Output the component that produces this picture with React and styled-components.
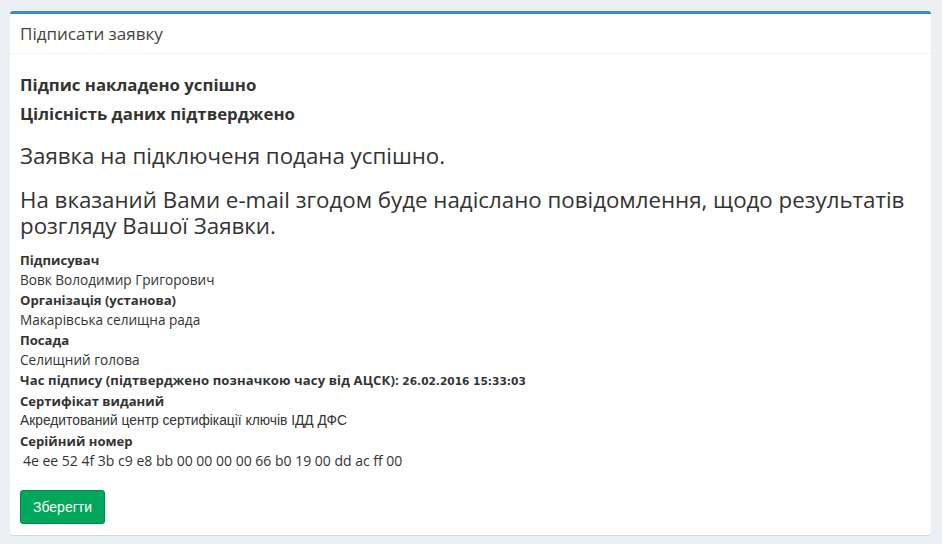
import styled, { createGlobalStyle } from "styled-components";

const GlobalStyle = createGlobalStyle`
  html, body {
    margin: 0;
    padding: 0;
    background: #ecf0f5;
  }
  body {
    font-family: "Open Sans", "Liberation Sans", sans-serif;
    color: #333;
  }
`;

const Page = styled.div`
  padding: 11px 11px 9px 10px;
`;

const Box = styled.div`
  background: #fff;
  border-top: 3px solid #3c8dbc;
  border-radius: 3px;
  box-shadow: 0 1px 1px rgba(0, 0, 0, 0.1);
`;

const BoxHeader = styled.div`
  height: 39px;
  display: flex;
  align-items: center;
  padding: 0 10px;
  border-bottom: 1px solid #f4f4f4;
`;

const BoxTitle = styled.h3`
  margin: 0 0 1px;
  font-size: 17px;
  font-weight: 400;
  color: #444;
`;

const BoxBody = styled.div`
  padding: 16px 10px 11px;
`;

const Status = styled.h4`
  margin: 0;
  font-size: 16.8px;
  font-weight: 700;
  line-height: 29px;
  color: #333;
`;

const Message = styled.h3`
  margin: ${(p) => p.$top || 0}px 0 0;
  font-size: 22.3px;
  font-weight: 400;
  line-height: 26px;
  color: #333;
`;

const Info = styled.div`
  margin-top: 11px;
  font-size: 13px;
  line-height: 20px;
  color: #333;
`;

const Label = styled.div`
  font-weight: 700;
  font-size: 13.1px;
`;

const TimeLabel = styled(Label)`
  letter-spacing: 0.12px;
`;

const Value = styled.div`
  padding-left: ${(p) => p.$indent || 0}px;
  font-size: ${(p) => p.$size || 13.6}px;
`;

const Issuer = styled.div`
  font-family: "Liberation Sans Narrow", "Liberation Sans", sans-serif;
  font-size: 13.8px;
`;

const Stamp = styled.span`
  font-family: "DejaVu Sans", Verdana, sans-serif;
  font-size: 10.6px;
  letter-spacing: 0;
`;

const SaveButton = styled.button`
  display: block;
  margin-top: 19px;
  height: 34px;
  padding: 0 12px;
  border: 1px solid #008d4c;
  border-radius: 3px;
  background: #00a65a;
  color: #fff;
  font-family: "Liberation Sans Narrow", "Liberation Sans", sans-serif;
  font-size: 14px;
  cursor: pointer;
`;

export default function App() {
  return (
    <>
      <GlobalStyle />
      <Page>
        <Box>
          <BoxHeader>
            <BoxTitle>Підписати заявку</BoxTitle>
          </BoxHeader>
          <BoxBody>
            <Status>Підпис накладено успішно</Status>
            <Status>Цілісність даних підтверджено</Status>
            <Message $top={15}>Заявка на підключеня подана успішно.</Message>
            <Message $top={18}>
              На вказаний Вами e-mail згодом буде надіслано повідомлення, щодо
              результатів розгляду Вашої Заявки.
            </Message>
            <Info>
              <Label>Підписувач</Label>
              <Value>Вовк Володимир Григорович</Value>
              <Label>Організація (установа)</Label>
              <Value>Макарівська селищна рада</Value>
              <Label>Посада</Label>
              <Value $indent={-1}>Селищний голова</Value>
              <TimeLabel>
                Час підпису (підтверджено позначкою часу від АЦСК):{" "}
                <Stamp>26.02.2016 15:33:03</Stamp>
              </TimeLabel>
              <Label>Сертифікат виданий</Label>
              <Issuer>Акредитований центр сертифікації ключів ІДД ДФС</Issuer>
              <Label>Серійний номер</Label>
              <Value $indent={3} $size={14}>
                4e ee 52 4f 3b c9 e8 bb 00 00 00 00 66 b0 19 00 dd ac ff 00
              </Value>
            </Info>
            <SaveButton>Зберегти</SaveButton>
          </BoxBody>
        </Box>
      </Page>
    </>
  );
}
